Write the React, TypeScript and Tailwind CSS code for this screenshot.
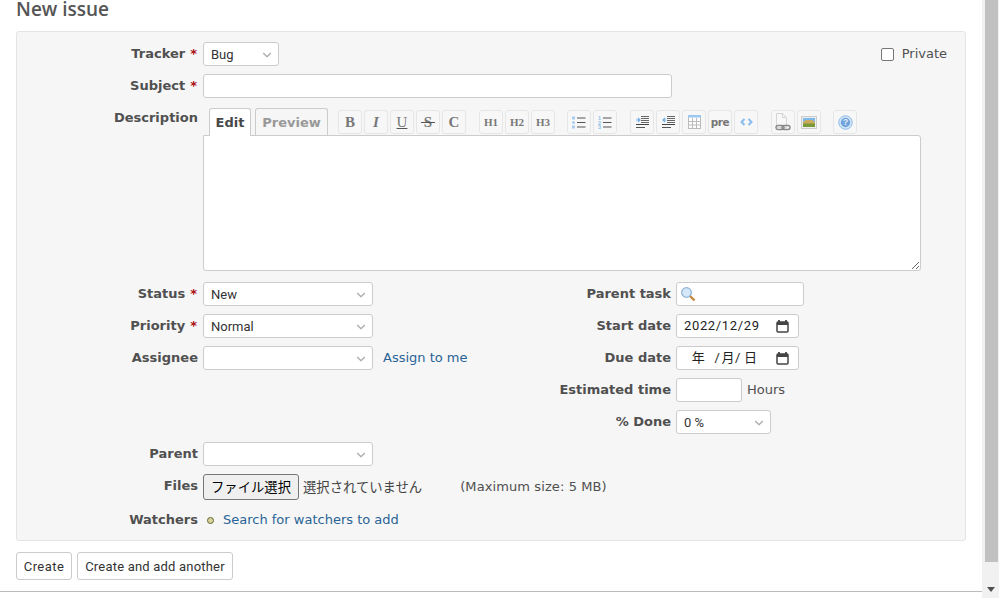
import React from 'react';
import { ChevronDown } from 'lucide-react';

const verdana = { fontFamily: '"DejaVu Sans", Verdana, sans-serif' };

function Label({ text, required }: { text: string; required?: boolean }) {
  return (
    <label className="w-[181px] shrink-0 text-right text-[13px] font-bold text-[#505050] leading-[24px] whitespace-nowrap">
      {text}
      {required && <span className="text-[#aa1111] ml-[5px] mr-px">*</span>}
    </label>
  );
}

function Select({ value, width }: { value: string; width: string }) {
  return (
    <div className={`relative h-[24px] ${width} shrink-0 bg-white border border-[#ccc] rounded-[3px] pl-[7px] text-[13px] leading-[23px] text-[#333] font-['Roboto',sans-serif]`}>
      {value}
      <ChevronDown size={14} strokeWidth={2} className="absolute right-[4px] top-[5px] text-[#aaa]" />
    </div>
  );
}

function Calendar() {
  return (
    <svg width="13" height="13" viewBox="0 0 13 13" className="shrink-0">
      <path d="M3 0v2M10 0v2" stroke="#444" strokeWidth="1.8" fill="none" />
      <rect x="1" y="2" width="11" height="10" rx="1" stroke="#444" strokeWidth="1.5" fill="none" />
      <rect x="1" y="2" width="11" height="3" fill="#444" />
    </svg>
  );
}

function DateField({ children }: { children: React.ReactNode }) {
  return (
    <div className="h-[24px] w-[123px] bg-white border border-[#ccc] rounded-[3px] flex items-center justify-between pl-[7px] pr-[9px] text-[13px] tracking-[0.65px] text-[#222] font-['Roboto','Noto_Sans_CJK_JP',sans-serif]">
      <span className="whitespace-pre">{children}</span>
      <Calendar />
    </div>
  );
}

function ToolButton({ children, className = '' }: { children: React.ReactNode; className?: string }) {
  return (
    <div className={`relative h-[24px] w-[24px] shrink-0 flex items-center justify-center bg-[#f7f7f7] border border-[#e6e6e6] rounded-[3px] text-[#777] ${className}`}>
      {children}
    </div>
  );
}

function SerifLetter({ children, className = '' }: { children: React.ReactNode; className?: string }) {
  return <span className={`font-['Liberation_Serif',serif] font-bold leading-none ${className}`}>{children}</span>;
}

function ListIcon({ numbered }: { numbered?: boolean }) {
  return (
    <svg width="14" height="13" viewBox="0 0 14 13">
      {numbered ? (
        <g fill="#8fbfea" fontSize="5.5" fontWeight="700" fontFamily="Liberation Sans, sans-serif">
          <text x="0" y="4.2">1</text>
          <text x="0" y="8.5">2</text>
          <text x="0" y="12.8">3</text>
        </g>
      ) : (
        <g fill="#a9cdf0">
          <rect x="0" y="0.5" width="3" height="3" />
          <circle cx="1.5" cy="6.5" r="1.5" />
          <rect x="0" y="9.5" width="3" height="3" />
        </g>
      )}
      <path d="M5 2h8.5M5 6.5h8.5M5 11h8.5" stroke="#555" strokeWidth="1" />
    </svg>
  );
}

function IndentIcon({ out }: { out?: boolean }) {
  return (
    <svg width="13" height="12" viewBox="0 0 13 12">
      <path d="M5 0.5h8M5 2.5h8M5 4.5h8M5 6.5h8" stroke="#666" strokeWidth="1" />
      <path d="M0 8.5h13" stroke="#444" strokeWidth="1" />
      <path d="M0 11.5h9" stroke="#555" strokeWidth="1" />
      {out ? (
        <path d="M4.5 4h-3.5M3 2L1 4l2 2" stroke="#6fb0ea" strokeWidth="1.2" fill="none" />
      ) : (
        <path d="M0 4h3.5M2 2l2 2-2 2" stroke="#6fb0ea" strokeWidth="1.2" fill="none" />
      )}
    </svg>
  );
}

export default function App() {
  return (
    <div className="flex h-[598px] w-[999px] overflow-hidden bg-white" style={verdana}>
      <div className="w-[982px] shrink-0 flex flex-col">
        <div className="flex-1 px-[16px]">
          <h2 className="text-[19px] leading-[19px] text-[#555] font-['Open_Sans',sans-serif] font-semibold h-[31px]">New issue</h2>

          <div className="w-[950px] h-[510px] bg-[#f6f6f6] border border-[#e4e4e4] rounded-[3px] pt-[10px]">
            <div className="flex gap-[5px] mb-[8px]">
              <Label text="Tracker" required />
              <Select value="Bug" width="w-[76px]" />
              <div className="ml-auto pr-[18px] flex items-center gap-[8px] text-[13px] text-[#505050]">
                <input type="checkbox" className="w-[13px] h-[13px] appearance-none bg-white border border-[#767676] rounded-[2px]" />
                Private
              </div>
            </div>

            <div className="flex gap-[5px]">
              <Label text="Subject" required />
              <input className="w-[469px] h-[24px] bg-white border border-[#ccc] rounded-[3px]" />
            </div>

            <div className="flex gap-[5px] mt-[8px] mb-[11px]">
              <Label text="Description" />
              <div className="w-[718px]">
                <div className="h-[29px] flex items-end pl-[6px]">
                  <div className="relative z-10 h-[28px] -mb-px w-[42px] bg-white border border-b-0 border-[#ccc] rounded-t-[3px] text-center text-[13px] font-bold text-[#484848] leading-[28px]">Edit</div>
                  <div className="ml-[4px] h-[27px] w-[73px] border border-b-0 border-[#ccc] rounded-t-[3px] text-center text-[13px] font-bold text-[#999] leading-[28px]">Preview</div>
                  <div className="flex ml-[10px] self-start mt-[4px] gap-[2px]">
                    <ToolButton><SerifLetter className="text-[15px]">B</SerifLetter></ToolButton>
                    <ToolButton><SerifLetter className="text-[15px] italic">I</SerifLetter></ToolButton>
                    <ToolButton><SerifLetter className="text-[15px] font-normal underline decoration-[#555]">U</SerifLetter></ToolButton>
                    <ToolButton>
                      <SerifLetter className="text-[15px]">S</SerifLetter>
                      <span className="absolute left-[4px] right-[4px] top-[11px] h-px bg-[#555]" />
                    </ToolButton>
                    <ToolButton><SerifLetter className="text-[15px]">C</SerifLetter></ToolButton>
                    <div className="w-[9px]" />
                    <ToolButton><SerifLetter className="text-[11px]">H1</SerifLetter></ToolButton>
                    <ToolButton><SerifLetter className="text-[11px]">H2</SerifLetter></ToolButton>
                    <ToolButton><SerifLetter className="text-[11px]">H3</SerifLetter></ToolButton>
                    <div className="w-[8px]" />
                    <ToolButton><ListIcon /></ToolButton>
                    <ToolButton><ListIcon numbered /></ToolButton>
                    <div className="w-[9px]" />
                    <ToolButton><IndentIcon /></ToolButton>
                    <ToolButton><IndentIcon out /></ToolButton>
                    <ToolButton>
                      <svg width="13" height="14" viewBox="0 0 13 14">
                        <rect x="0.5" y="0.5" width="12" height="13" fill="#fff" stroke="#bbb" />
                        <rect x="0" y="0" width="13" height="2.5" fill="#9cc8ef" />
                        <path d="M4.5 3v11M8.5 3v11M0 6.5h13M0 10h13" stroke="#bbb" />
                      </svg>
                    </ToolButton>
                    <ToolButton><span className="text-[10.5px] font-bold tracking-[-0.4px] leading-none">pre</span></ToolButton>
                    <ToolButton>
                      <svg width="13" height="8" viewBox="0 0 13 8">
                        <path d="M4.5 1L1.5 4l3 3M8.5 1l3 3-3 3" stroke="#86bcee" strokeWidth="2" fill="none" />
                      </svg>
                    </ToolButton>
                    <div className="w-[9px]" />
                    <ToolButton>
                      <svg width="16" height="18" viewBox="0 0 16 18">
                        <path d="M1.5 0.5h6l4 4v10h-10z" fill="#f8f8f8" stroke="#d5d5d5" />
                        <path d="M7.5 0.5v4h4" fill="none" stroke="#d5d5d5" />
                        <rect x="1" y="12.5" width="8" height="4" rx="2" fill="none" stroke="#888" strokeWidth="1.4" />
                        <rect x="7" y="12.5" width="8" height="4" rx="2" fill="none" stroke="#888" strokeWidth="1.4" />
                      </svg>
                    </ToolButton>
                    <ToolButton>
                      <svg width="16" height="13" viewBox="0 0 16 13">
                        <rect x="0.5" y="0.5" width="15" height="12" fill="#eee" stroke="#ccc" />
                        <rect x="2" y="2" width="12" height="4" fill="#7db9e8" />
                        <path d="M2 6l3-2 6 0 3 2v2H2z" fill="#cba95f" />
                        <rect x="2" y="7.5" width="12" height="3.5" fill="#7a9a3a" />
                      </svg>
                    </ToolButton>
                    <div className="w-[8px]" />
                    <ToolButton>
                      <svg width="15" height="15" viewBox="0 0 16 16">
                        <circle cx="8" cy="8" r="7.2" fill="#d5e6f7" stroke="#8ab8e6" />
                        <circle cx="8" cy="8" r="5" fill="#6fa3de" />
                        <text x="8" y="11" textAnchor="middle" fontSize="9" fontWeight="700" fill="#e6eef6" fontFamily="Liberation Sans, sans-serif">?</text>
                      </svg>
                    </ToolButton>
                  </div>
                </div>
                <textarea className="block w-[718px] h-[136px] bg-white border border-[#ccc] rounded-[3px] rounded-tl-none resize-y" />
              </div>
            </div>

            <div className="flex">
              <div className="w-[473px] shrink-0">
                <div className="flex gap-[5px] mb-[8px]">
                  <Label text="Status" required />
                  <Select value="New" width="w-[170px]" />
                </div>
                <div className="flex gap-[5px] mb-[8px]">
                  <Label text="Priority" required />
                  <Select value="Normal" width="w-[170px]" />
                </div>
                <div className="flex gap-[5px]">
                  <Label text="Assignee" />
                  <Select value="" width="w-[170px]" />
                  <a className="ml-[5px] text-[13px] leading-[24px] text-[#2a6496] whitespace-nowrap">Assign to me</a>
                </div>
              </div>
              <div className="flex-1">
                <div className="flex gap-[5px] mb-[8px]">
                  <Label text="Parent task" />
                  <div className="h-[24px] w-[128px] bg-white border border-[#ccc] rounded-[3px] flex items-center pl-[3px]">
                    <svg width="16" height="16" viewBox="0 0 16 16">
                      <path d="M9.5 9.5l5 5" stroke="#c8873c" strokeWidth="2.4" />
                      <circle cx="6.5" cy="6.5" r="4.8" fill="#d4e8f8" stroke="#8fb4d6" strokeWidth="1.3" />
                    </svg>
                  </div>
                </div>
                <div className="flex gap-[5px] mb-[8px]">
                  <Label text="Start date" />
                  <DateField>2022/12/29</DateField>
                </div>
                <div className="flex gap-[5px] mb-[8px]">
                  <Label text="Due date" />
                  <DateField>
                    {'  年'}
                    <span className="ml-[9px]">/</span>
                    <span className="ml-[1px]">月</span>
                    /
                    <span className="ml-[3px]">日</span>
                  </DateField>
                </div>
                <div className="flex gap-[5px] mb-[8px]">
                  <Label text="Estimated time" />
                  <input className="w-[66px] h-[24px] bg-white border border-[#ccc] rounded-[3px]" />
                  <span className="text-[13px] leading-[24px] text-[#505050]">Hours</span>
                </div>
                <div className="flex gap-[5px]">
                  <Label text="% Done" />
                  <Select value="0 %" width="w-[95px]" />
                </div>
              </div>
            </div>

            <div className="flex gap-[5px] mt-[8px] mb-[8px]">
              <Label text="Parent" />
              <Select value="" width="w-[170px]" />
            </div>

            <div className="flex gap-[5px] h-[26px]">
              <Label text="Files" />
              <button className="w-[96px] h-[26px] bg-[#efefef] border border-[#767676] rounded-[3px] text-[13.33px] leading-[24px] text-black font-['Noto_Sans_CJK_JP',sans-serif]">ファイル選択</button>
              <span className="ml-[-1px] text-[13.33px] leading-[25px] text-[#444] font-['Noto_Sans_CJK_JP',sans-serif]">選択されていません</span>
              <span className="ml-[33px] text-[13px] leading-[26px] tracking-[0.1px] text-[#505050]">(Maximum size: 5 MB)</span>
            </div>

            <div className="flex gap-[5px] mt-[8px]">
              <Label text="Watchers" />
              <div className="flex items-center">
                <span className="ml-[4px] w-[7px] h-[7px] rounded-full bg-[#d8d49a] border-[1.5px] border-[#5f6638]" />
                <a className="ml-[9px] text-[13px] text-[#2a6496]">Search for watchers to add</a>
              </div>
            </div>
          </div>

          <div className="flex gap-[5px] mt-[11px]">
            <button className="w-[56px] h-[28px] bg-white border border-[#ccc] rounded-[3px] text-[13px] leading-[27px] tracking-[0.45px] text-[#333] whitespace-nowrap font-['Roboto',sans-serif]">Create</button>
            <button className="w-[156px] h-[28px] bg-white border border-[#ccc] rounded-[3px] text-[13px] leading-[27px] tracking-[0.2px] text-[#333] whitespace-nowrap font-['Roboto',sans-serif]">Create and add another</button>
          </div>
        </div>
        <div className="h-[7px] border-t border-[#bbb] shrink-0" />
      </div>

      <div className="w-[17px] shrink-0 bg-[#f1f1f1] flex flex-col items-center">
        <div className="w-[13px] h-[562px] bg-[#c1c1c1] ml-[1px]" />
        <div className="mt-auto mb-[6px] w-0 h-0 border-x-[4px] border-x-transparent border-t-[5px] border-t-[#505050]" />
      </div>
    </div>
  );
}
